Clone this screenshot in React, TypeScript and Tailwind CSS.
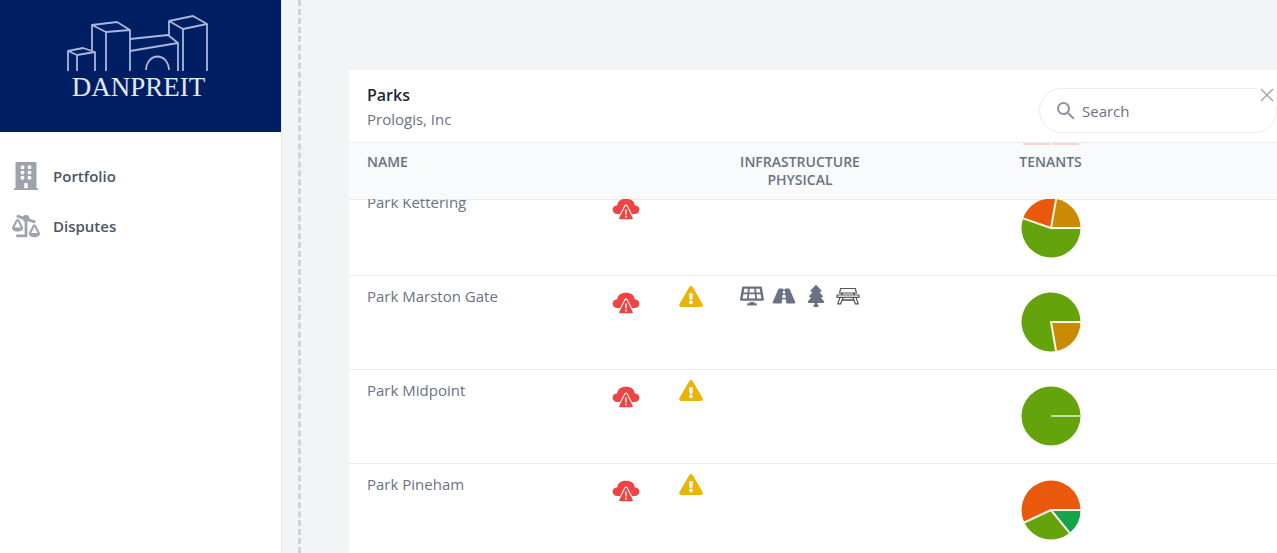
import React from 'react';
import { FaBuilding, FaBalanceScaleRight, FaSolarPanel, FaRoad, FaTree, FaExclamationTriangle } from 'react-icons/fa';
import { MdSearch } from 'react-icons/md';

type Slice = { from: number; to: number; color: string };
type Park = { name: string; warning: boolean; amenities: boolean; slices: Slice[] };

const ORANGE = '#ea580c';
const AMBER = '#ca8a04';
const LIME = '#65a30d';
const GREEN = '#16a34a';

// Angles are in degrees, clockwise from three o'clock.
const parks: Park[] = [
  {
    name: 'Park Kettering',
    warning: false,
    amenities: false,
    slices: [
      { from: 0, to: 199, color: LIME },
      { from: 199, to: 280, color: ORANGE },
      { from: 280, to: 360, color: AMBER },
    ],
  },
  {
    name: 'Park Marston Gate',
    warning: true,
    amenities: true,
    slices: [
      { from: 0, to: 80, color: AMBER },
      { from: 80, to: 360, color: LIME },
    ],
  },
  { name: 'Park Midpoint', warning: true, amenities: false, slices: [{ from: 0, to: 360, color: LIME }] },
  {
    name: 'Park Pineham',
    warning: true,
    amenities: false,
    slices: [
      { from: 0, to: 51, color: GREEN },
      { from: 51, to: 155, color: LIME },
      { from: 155, to: 360, color: ORANGE },
    ],
  },
];

function Pie({ slices }: { slices: Slice[] }) {
  const c = 30;
  const r = 29.5;
  const at = (deg: number) => {
    const a = (deg * Math.PI) / 180;
    return `${(c + r * Math.cos(a)).toFixed(2)} ${(c + r * Math.sin(a)).toFixed(2)}`;
  };
  if (slices.length === 1) {
    return (
      <svg viewBox="0 0 60 60" className="block size-[60px]" aria-hidden="true">
        <circle cx={c} cy={c} r={r} fill={slices[0].color} />
        <path d="M30 30H60" stroke="#c5dea3" strokeWidth="2" />
      </svg>
    );
  }
  return (
    <svg viewBox="0 0 60 60" className="block size-[60px]" aria-hidden="true">
      {slices.map((s) => (
        <path
          key={s.from}
          d={`M${c} ${c}L${at(s.from)}A${r} ${r} 0 ${s.to - s.from > 180 ? 1 : 0} 1 ${at(s.to)}Z`}
          fill={s.color}
        />
      ))}
      {slices.map((s) => (
        <path key={s.from} d={`M${c} ${c}L${at(s.from)}`} stroke="#fbf6ea" strokeWidth="2" strokeLinecap="round" />
      ))}
    </svg>
  );
}

function CloudAlert() {
  return (
    <svg viewBox="0 0 28 22" className="block h-[22px] w-7" aria-hidden="true">
      <path
        d="M5.500 16A4.800 4.800 0 0 1 .6 11.600C.6 9.200 2.600 7.500 5.300 7.300C5.300 3.500 9 .8 14 .8s8.700 2.700 8.700 6.500c2.700.2 4.700 1.900 4.700 4.300a4.800 4.800 0 0 1-4.900 4.400z"
        fill="#ef4444"
      />
      <path d="M14 8.500L8 20.300H20Z" fill="#ef4444" stroke="#fff" strokeWidth="3.800" strokeLinejoin="round" />
      <path d="M14 8.700L8 20.300H20Z" fill="#ef4444" stroke="#ef4444" strokeWidth="1.800" strokeLinejoin="round" />
      <path d="M14 11.600V16.400M14 17.800V19.400" stroke="#fff" strokeWidth="1.400" />
    </svg>
  );
}

function PicnicTable() {
  return (
    <svg viewBox="0 0 24 18" className="block h-[18px] w-6" fill="none" stroke="#55555b" strokeWidth="1.200" aria-hidden="true">
      <path d="M4.600 1.500H19.400L20.400 6H3.600Z" />
      <path d="M6 6V8M18 6V8" strokeWidth="1.800" />
      <path d="M1 8H23V10.300H1Z" />
      <path d="M4 10.300L1.800 16.800H4.600L7.200 10.300M20 10.300L22.200 16.800H19.400L16.800 10.300" />
      <path d="M6 13H18" strokeWidth="1.600" />
    </svg>
  );
}

function Logo() {
  return (
    <div className="flex flex-col items-center">
      <svg
        viewBox="0 0 144 58"
        className="block h-[58px] w-36"
        fill="none"
        stroke="#a9b6de"
        strokeWidth="1.800"
        strokeLinejoin="round"
        aria-hidden="true"
      >
        <path d="M1 57V37L10 41V57M1 37L16 34L28 38L10 41M28 38V57" />
        <path d="M25 36V11L39 18V57M25 11L50 8L63 16L39 18M63 16V57" />
        <path d="M63 25L101 21L111 29L63 37M111 29V57" />
        <path d="M102 22V7L116 15V57M102 7L126 2L140 10L116 15M140 10V57" />
        <path d="M79 56C80 38 101 38 102 56" />
      </svg>
      <span className="font-['Liberation_Serif',serif] text-[27px] leading-[30px] text-[#e2e8f8]">DANPREIT</span>
    </div>
  );
}

export default function App() {
  return (
    <div className="flex h-screen overflow-hidden bg-[#f3f4f6] font-['Open_Sans','Noto_Sans',sans-serif] text-[15px] leading-6">
      <aside className="flex w-[282px] shrink-0 flex-col border-r border-gray-200 bg-white">
        <div className="flex h-[132px] justify-center bg-[#001e62] pt-[14px] pr-1">
          <Logo />
        </div>
        <nav className="flex flex-col pt-[19px] font-semibold text-gray-600">
          <a href="#portfolio" className="flex h-[50px] items-center gap-[13px] pl-3">
            <FaBuilding className="h-7 w-7 text-[#9ca3af]" />
            Portfolio
          </a>
          <a href="#disputes" className="flex h-[50px] items-center gap-[13px] pl-3">
            <FaBalanceScaleRight className="h-7 w-7 text-[#9ca3af]" />
            Disputes
          </a>
        </nav>
      </aside>

      <main className="ml-4 flex min-w-0 flex-1 border-l-[3px] border-dashed border-[#d1d3d6] pt-[70px] pl-12">
        <section className="flex min-w-0 flex-1 flex-col bg-white">
          <header className="flex h-[72px] shrink-0 items-start justify-between pt-[13px] pl-[18px]">
            <div>
              <h1 className="text-base leading-6 font-semibold text-gray-800">Parks</h1>
              <p className="text-gray-500">Prologis, Inc</p>
            </div>
            <div className="relative mt-[5px] w-[238px]">
              <label className="flex h-[45px] items-center gap-1 rounded-full border border-[#ececee] pr-8 pl-[14px]">
                <MdSearch className="size-6 shrink-0 text-[#8b939e]" />
                <input
                  type="text"
                  aria-label="Search"
                  placeholder="Search"
                  className="w-full min-w-0 bg-transparent outline-none placeholder:text-gray-500"
                />
              </label>
              <button type="button" aria-label="Close" className="absolute -top-1 right-0 bg-white px-[3px] py-1">
                <svg viewBox="0 0 14 14" className="block size-[14px]" stroke="#a3a7ad" strokeWidth="1.500">
                  <path d="M1 1L13 13M13 1L1 13" />
                </svg>
              </button>
            </div>
          </header>

          <table className="w-full table-fixed border-collapse">
            <colgroup>
              <col className="w-[245px]" />
              <col className="w-[67px]" />
              <col className="w-[61px]" />
              <col className="w-[156px]" />
              <col className="w-[123px]" />
              <col className="w-[99px]" />
              <col />
            </colgroup>
            <thead className="relative z-10 bg-[#f9fafb] text-sm leading-[18px] text-gray-500 uppercase">
              <tr className="h-[57px] border-y border-[#ececef] align-top">
                <th className="pt-[10px] pl-[18px] text-left font-semibold">Name</th>
                <th />
                <th />
                <th className="pt-[10px] text-center font-semibold">
                  Infrastructure
                  <br />
                  Physical
                </th>
                <th />
                <th className="relative pt-[10px] text-center font-semibold">
                  Tenants
                  <span className="absolute top-0 left-[22px] flex h-[2px] w-14 gap-[2px]">
                    <span className="flex-1 bg-[#fbd5c4]" />
                    <span className="flex-1 bg-[#fbd5cd]" />
                  </span>
                </th>
                <th />
              </tr>
            </thead>
            <tbody className="text-gray-500">
              {parks.map((park, i) => (
                <tr key={park.name} className={`border-b border-[#ececef] align-top ${i === 0 ? 'h-[76px]' : 'h-[94px]'}`}>
                  <td className="pl-[18px]">
                    <div className={i === 0 ? '-mt-[10px]' : 'mt-2'}>{park.name}</div>
                  </td>
                  <td className="pl-[18px]">
                    <div className={i === 0 ? '-mt-[2px]' : 'mt-4'}>
                      <CloudAlert />
                    </div>
                  </td>
                  <td className="pl-[18px]">
                    {park.warning && <FaExclamationTriangle className="mt-[10px] h-[21px] w-6 text-[#eab308]" />}
                  </td>
                  <td className="pl-[18px]">
                    {park.amenities && (
                      <div className="mt-[9px] flex items-center gap-2">
                        <FaSolarPanel className="h-5 w-6" />
                        <FaRoad className="h-5 w-6" />
                        <FaTree className="h-[22px] w-6" />
                        <PicnicTable />
                      </div>
                    )}
                  </td>
                  <td />
                  <td className="pl-5">
                    <div className={i === 0 ? '-mt-[2px]' : 'mt-4'}>
                      <Pie slices={park.slices} />
                    </div>
                  </td>
                  <td />
                </tr>
              ))}
            </tbody>
          </table>
        </section>
      </main>
    </div>
  );
}
